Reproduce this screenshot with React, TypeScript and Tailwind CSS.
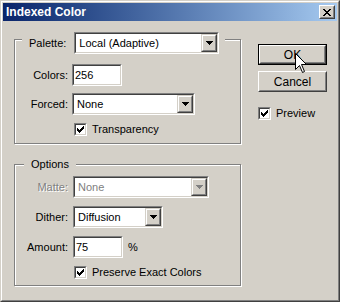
import type { ReactNode } from "react";

const face = "bg-[#d4d0c8]";

function Sunken({ className = "", children }: { className?: string; children?: ReactNode }) {
  return (
    <div className={`border border-t-[#808080] border-l-[#808080] border-b-white border-r-white ${className}`}>
      <div className="flex h-full border border-t-[#404040] border-l-[#404040] border-b-[#d4d0c8] border-r-[#d4d0c8] bg-white">
        {children}
      </div>
    </div>
  );
}

function Arrow({ disabled = false }: { disabled?: boolean }) {
  return (
    <div className="flex h-full w-[16px] shrink-0 items-center justify-center border border-t-[#d4d0c8] border-l-[#d4d0c8] border-b-[#404040] border-r-[#404040] bg-[#d4d0c8]">
      <div className="flex h-full w-full items-center justify-center border border-t-white border-l-white border-b-[#808080] border-r-[#808080]">
        <svg width="7" height="4" viewBox="0 0 7 4" shapeRendering="crispEdges">
          <g fill={disabled ? "#808080" : "#000"}>
            <rect x="0" y="0" width="7" height="1" />
            <rect x="1" y="1" width="5" height="1" />
            <rect x="2" y="2" width="3" height="1" />
            <rect x="3" y="3" width="1" height="1" />
          </g>
        </svg>
      </div>
    </div>
  );
}

function Select({ value, width, disabled = false }: { value: string; width: string; disabled?: boolean }) {
  return (
    <Sunken className={`${width} h-[22px]`}>
      <div className={`flex flex-1 items-center pl-[3px] ${disabled ? "text-[#808080]" : "text-black"}`}>{value}</div>
      <Arrow disabled={disabled} />
    </Sunken>
  );
}

function Field({ value, width }: { value: string; width: string }) {
  return (
    <Sunken className={`${width} h-[22px]`}>
      <div className="flex flex-1 items-center pl-[1px]">{value}</div>
    </Sunken>
  );
}

function Check({ label }: { label: string }) {
  return (
    <div className="flex items-center gap-[5px]">
      <Sunken className="h-[13px] w-[13px]">
        <svg width="9" height="9" viewBox="0 0 9 9" shapeRendering="crispEdges">
          <g fill="#000">
            <rect x="7" y="1" width="1" height="1" />
            <rect x="6" y="2" width="2" height="1" />
            <rect x="1" y="3" width="1" height="1" />
            <rect x="5" y="3" width="3" height="1" />
            <rect x="1" y="4" width="2" height="1" />
            <rect x="4" y="4" width="3" height="1" />
            <rect x="1" y="5" width="5" height="1" />
            <rect x="2" y="6" width="3" height="1" />
            <rect x="3" y="7" width="1" height="1" />
          </g>
        </svg>
      </Sunken>
      <span>{label}</span>
    </div>
  );
}

function Button({ label, primary = false }: { label: string; primary?: boolean }) {
  const inner = (
    <div className="h-full border border-t-white border-l-white border-b-[#404040] border-r-[#404040]">
      <div className="flex h-full items-center justify-center border border-t-[#d4d0c8] border-l-[#d4d0c8] border-b-[#808080] border-r-[#808080] text-[12px]">
        {label}
      </div>
    </div>
  );
  return primary ? (
    <div className="h-[21px] w-[69px] border border-black">{inner}</div>
  ) : (
    <div className="h-[21px] w-[69px]">{inner}</div>
  );
}

function Group({ className, children }: { className: string; children: ReactNode }) {
  return (
    <div className={`relative border border-[#808080] shadow-[inset_1px_1px_0_#fff,1px_1px_0_#fff] ${className}`}>
      {children}
    </div>
  );
}

function Label({ children, w, disabled = false }: { children: ReactNode; w: string; disabled?: boolean }) {
  return (
    <span className={`${w} shrink-0 text-right ${disabled ? "text-[#808080] [text-shadow:1px_1px_0_#fff]" : ""}`}>
      {children}
    </span>
  );
}

function Cursor() {
  return (
    <svg className="absolute left-[295px] top-[53px]" width="13" height="21" viewBox="0 0 13 21">
      <path
        d="M0.5 0.5 L0.5 16.5 L4.5 12.5 L7.5 19.5 L9.5 18.5 L6.5 11.5 L11.5 11.5 Z"
        fill="#fff"
        stroke="#000"
        strokeWidth="1"
      />
    </svg>
  );
}

export default function App() {
  return (
    <div className="relative h-[302px] w-[340px] font-['Liberation_Sans',Arial,sans-serif] text-[11px] leading-none text-black">
      <div className={`h-full border border-t-[#d4d0c8] border-l-[#d4d0c8] border-b-[#404040] border-r-[#404040] ${face}`}>
        <div className="flex h-full flex-col border border-t-white border-l-white border-b-[#808080] border-r-[#808080] p-[1px]">
          <div className="flex h-[18px] shrink-0 items-center justify-between bg-gradient-to-r from-[#0a246a] to-[#a6caf0] pl-[3px] pr-[2px]">
            <span className="text-[12px] font-bold text-white">Indexed Color</span>
            <div className="h-[14px] w-[16px] border border-t-white border-l-white border-b-[#404040] border-r-[#404040] bg-[#d4d0c8]">
              <div className="flex h-full items-center justify-center border border-t-[#d4d0c8] border-l-[#d4d0c8] border-b-[#808080] border-r-[#808080]">
                <svg width="8" height="7" viewBox="0 0 8 7" shapeRendering="crispEdges">
                  <g fill="#000">
                    <rect x="0" y="0" width="2" height="1" />
                    <rect x="6" y="0" width="2" height="1" />
                    <rect x="1" y="1" width="2" height="1" />
                    <rect x="5" y="1" width="2" height="1" />
                    <rect x="2" y="2" width="4" height="1" />
                    <rect x="3" y="3" width="2" height="1" />
                    <rect x="2" y="4" width="4" height="1" />
                    <rect x="1" y="5" width="2" height="1" />
                    <rect x="5" y="5" width="2" height="1" />
                    <rect x="0" y="6" width="2" height="1" />
                    <rect x="6" y="6" width="2" height="1" />
                  </g>
                </svg>
              </div>
            </div>
          </div>

          <div className="flex flex-1 pl-[11px]">
            <div className="flex w-[227px] flex-col pt-[18px]">
              <Group className="h-[105px]">
                <div className={`absolute left-[7px] top-[-8px] flex items-center gap-[8px] pl-[7px] pr-[6px] ${face}`}>
                  <span>Palette:</span>
                  <Select value="Local (Adaptive)" width="w-[145px]" />
                </div>
                <div className="flex flex-col pt-[24px]">
                  <div className="flex items-center gap-[4px]">
                    <Label w="w-[53px]">Colors:</Label>
                    <Field value="256" width="w-[50px]" />
                  </div>
                  <div className="mt-[7px] flex items-center gap-[4px]">
                    <Label w="w-[53px]">Forced:</Label>
                    <Select value="None" width="w-[123px]" />
                  </div>
                  <div className="mt-[8px] pl-[59px]">
                    <Check label="Transparency" />
                  </div>
                </div>
              </Group>

              <Group className="mt-[20px] h-[122px]">
                <div className={`absolute left-[9px] top-[-6px] px-[7px] ${face}`}>Options</div>
                <div className="flex flex-col pt-[11px]">
                  <div className="flex items-center gap-[5px]">
                    <Label w="w-[53px]" disabled>
                      Matte:
                    </Label>
                    <Select value="None" width="w-[136px]" disabled />
                  </div>
                  <div className="mt-[8px] flex items-center gap-[5px]">
                    <Label w="w-[53px]">Dither:</Label>
                    <Select value="Diffusion" width="w-[90px]" />
                  </div>
                  <div className="mt-[8px] flex items-center gap-[5px]">
                    <Label w="w-[53px]">Amount:</Label>
                    <Field value="75" width="w-[50px]" />
                    <span>%</span>
                  </div>
                  <div className="mt-[8px] pl-[59px]">
                    <Check label="Preserve Exact Colors" />
                  </div>
                </div>
              </Group>
            </div>

            <div className="ml-[17px] flex flex-col pt-[23px]">
              <Button label="OK" primary />
              <div className="mt-[6px]">
                <Button label="Cancel" />
              </div>
              <div className="mt-[15px]">
                <Check label="Preview" />
              </div>
            </div>
          </div>
        </div>
      </div>
      <Cursor />
    </div>
  );
}
